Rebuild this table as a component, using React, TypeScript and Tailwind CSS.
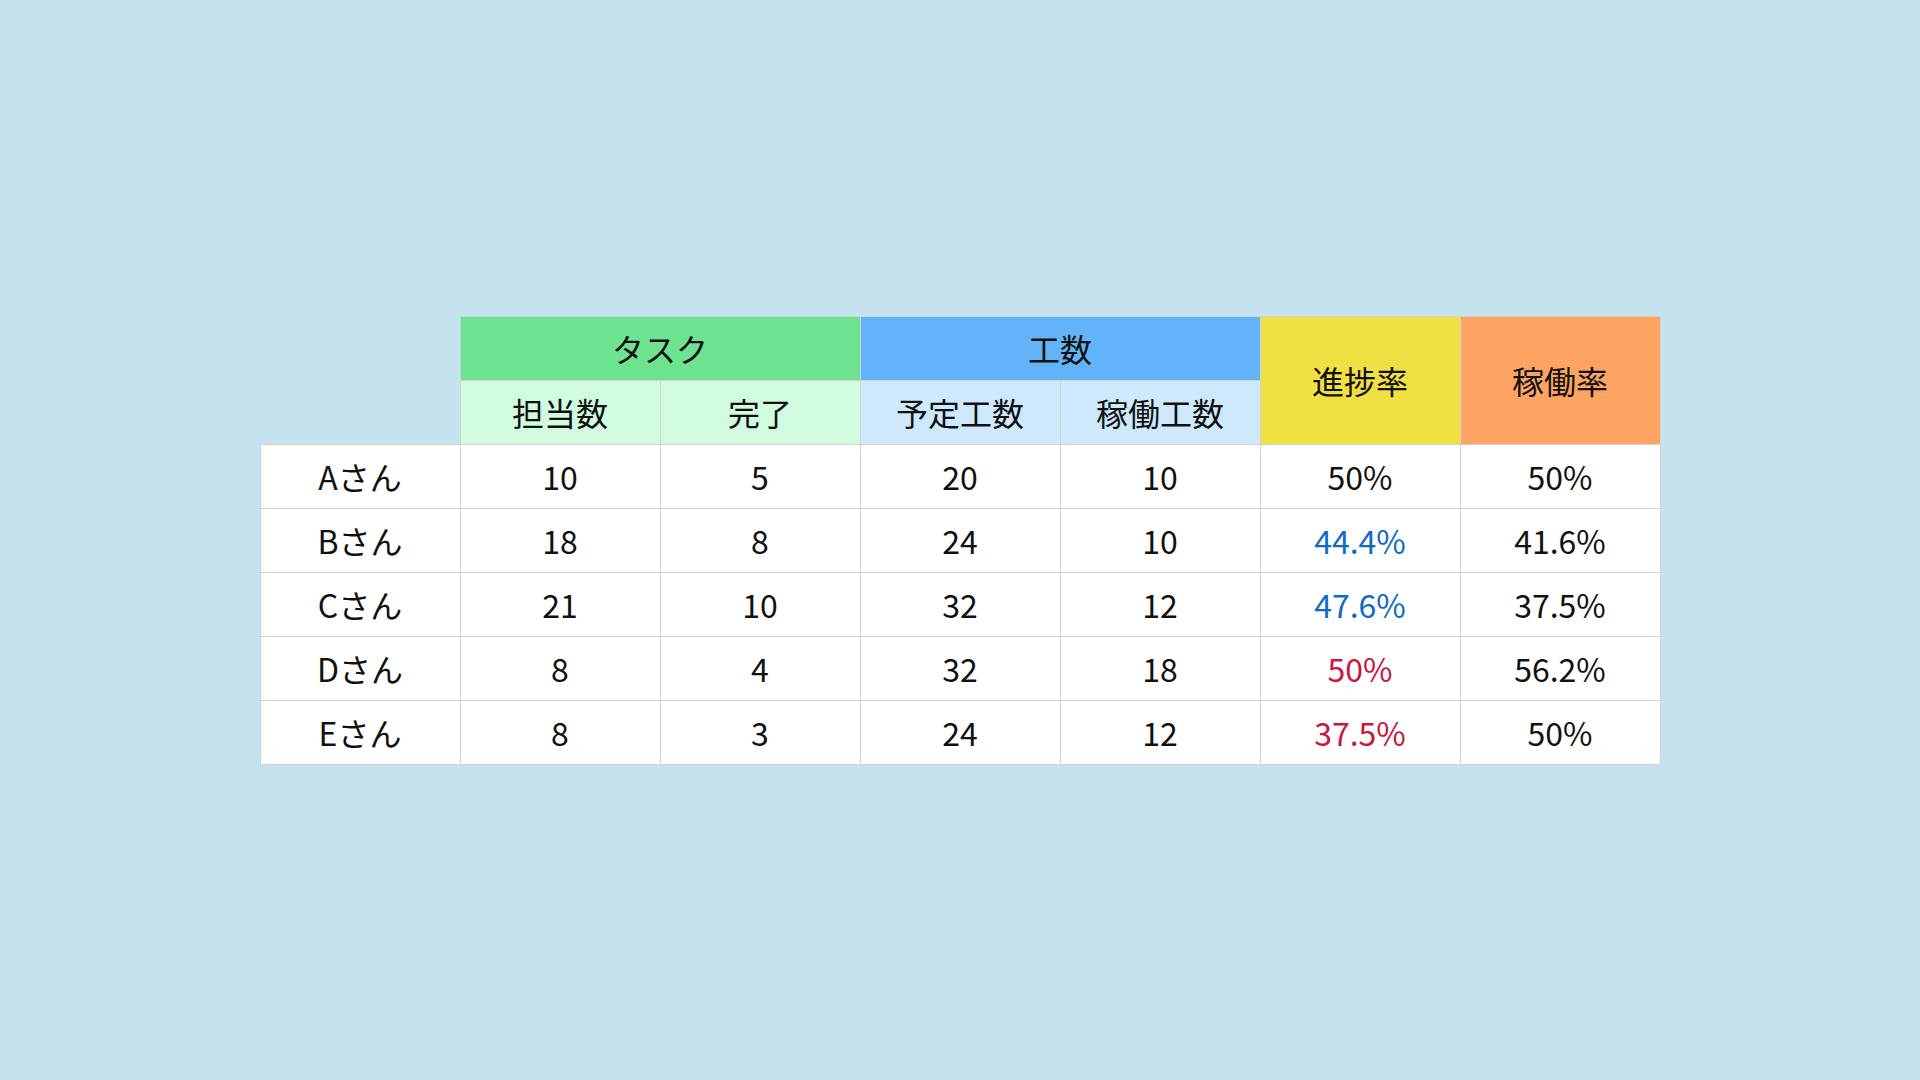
import React from "react"

type Row = {
  name: string
  assigned: string
  done: string
  planned: string
  actual: string
  progress: string
  progressTone: "normal" | "good" | "bad"
  utilization: string
}

const rows: Row[] = [
  { name: "Aさん", assigned: "10", done: "5", planned: "20", actual: "10", progress: "50%", progressTone: "normal", utilization: "50%" },
  { name: "Bさん", assigned: "18", done: "8", planned: "24", actual: "10", progress: "44.4%", progressTone: "good", utilization: "41.6%" },
  { name: "Cさん", assigned: "21", done: "10", planned: "32", actual: "12", progress: "47.6%", progressTone: "good", utilization: "37.5%" },
  { name: "Dさん", assigned: "8", done: "4", planned: "32", actual: "18", progress: "50%", progressTone: "bad", utilization: "56.2%" },
  { name: "Eさん", assigned: "8", done: "3", planned: "24", actual: "12", progress: "37.5%", progressTone: "bad", utilization: "50%" },
]

const toneClass = {
  normal: "text-[#111]",
  good: "text-[#1169c4]",
  bad: "text-[#c8183f]",
}

const cell = "w-[200px] h-[64px] border border-[#d2d2d2] text-center align-middle p-0"

export default function App() {
  return (
    <div
      className="w-full h-screen bg-[#c5e2ef] flex items-center justify-center text-[#111]"
      style={{ fontFamily: '"Noto Sans CJK JP", "Noto Sans", sans-serif' }}
    >
      <table className="border-collapse table-fixed text-[32px] leading-none">
        <thead>
          <tr>
            <th rowSpan={2} className="w-[200px] p-0" />
            <th colSpan={2} className={`${cell} bg-[#6de290] font-normal`}>タスク</th>
            <th colSpan={2} className={`${cell} bg-[#63b3fa] font-normal`}>工数</th>
            <th rowSpan={2} className={`${cell} bg-[#f0e041] font-normal`}>進捗率</th>
            <th rowSpan={2} className={`${cell} bg-[#fea463] font-normal`}>稼働率</th>
          </tr>
          <tr>
            <th className={`${cell} bg-[#d1fbdf] font-normal`}>担当数</th>
            <th className={`${cell} bg-[#d1fbdf] font-normal`}>完了</th>
            <th className={`${cell} bg-[#cde9fb] font-normal`}>予定工数</th>
            <th className={`${cell} bg-[#cde9fb] font-normal`}>稼働工数</th>
          </tr>
        </thead>
        <tbody className="bg-white">
          {rows.map((r) => (
            <tr key={r.name}>
              <td className={cell}>{r.name}</td>
              <td className={cell}>{r.assigned}</td>
              <td className={cell}>{r.done}</td>
              <td className={cell}>{r.planned}</td>
              <td className={cell}>{r.actual}</td>
              <td className={`${cell} ${toneClass[r.progressTone]}`}>{r.progress}</td>
              <td className={cell}>{r.utilization}</td>
            </tr>
          ))}
        </tbody>
      </table>
    </div>
  )
}
